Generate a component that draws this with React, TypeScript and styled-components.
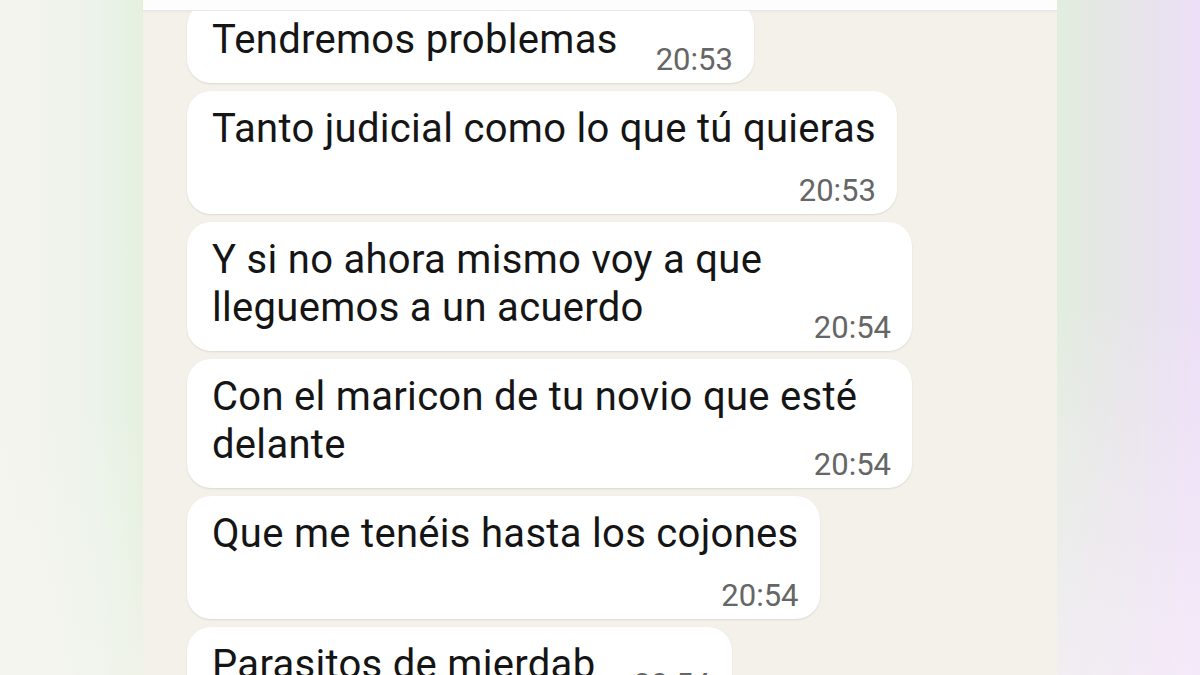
import styled, { createGlobalStyle, css } from "styled-components";

type Message = {
  text: string;
  time: string;
  stacked?: boolean;
};

const messages: Message[] = [
  { text: "Tendremos problemas", time: "20:53" },
  { text: "Tanto judicial como lo que tú quieras", time: "20:53", stacked: true },
  { text: "Y si no ahora mismo voy a que lleguemos a un acuerdo", time: "20:54" },
  { text: "Con el maricon de tu novio que esté delante", time: "20:54" },
  { text: "Que me tenéis hasta los cojones", time: "20:54", stacked: true },
  { text: "Parasitos de mierdab", time: "20:54" },
];

const GlobalStyle = createGlobalStyle`
  html, body {
    margin: 0;
    padding: 0;
    width: 1200px;
    height: 675px;
    overflow: hidden;
  }

  body {
    font-family: Roboto, "Noto Sans", "Liberation Sans", sans-serif;
  }
`;

const Page = styled.div`
  display: flex;
  width: 1200px;
  height: 675px;
  overflow: hidden;
`;

const LeftBlur = styled.div`
  width: 143px;
  flex-shrink: 0;
  background:
    linear-gradient(180deg, rgba(255, 255, 255, 0) 60%, rgba(246, 246, 240, 0.5) 100%),
    linear-gradient(90deg, #f4f4ee 0%, #f0f3ec 40%, #ebf3ea 70%, #e5f0de 100%);
`;

const RightBlur = styled.div`
  width: 143px;
  flex-shrink: 0;
  background:
    linear-gradient(180deg, rgba(255, 255, 255, 0) 45%, rgba(248, 238, 250, 0.7) 100%),
    linear-gradient(90deg, #e2eddf 0%, #e4e8e3 25%, #e7e4ea 55%, #ecdff7 100%);
`;

const Phone = styled.div`
  flex: 1;
  display: flex;
  flex-direction: column;
  background: #f4f1ea;
  min-width: 0;
`;

const Header = styled.div`
  height: 10px;
  flex-shrink: 0;
  background: #fdfdfd;
  border-bottom: 1px solid #e8e7e2;
  box-shadow: 0 1px 2px rgba(0, 0, 0, 0.04);
`;

const ChatList = styled.div`
  flex: 1;
  overflow: hidden;
  display: flex;
  flex-direction: column;
  align-items: flex-start;
  gap: 8px;
  padding-left: 44px;

  & > :first-child {
    margin-top: -9px;
  }
`;

const Bubble = styled.div`
  box-sizing: border-box;
  max-width: 725px;
  flex-shrink: 0;
  background: #ffffff;
  border-radius: 24px;
  padding: 14px 21px 8px 25px;
  box-shadow: 0 1px 2px rgba(0, 0, 0, 0.1);
`;

const Text = styled.div`
  font-size: 40px;
  line-height: 48px;
  color: #151515;
  letter-spacing: 0.3px;
`;

const Time = styled.span<{ $stacked?: boolean }>`
  font-size: 31px;
  line-height: 30px;
  color: #666666;
  letter-spacing: 0;

  ${(p) =>
    p.$stacked
      ? css`
          display: block;
          text-align: right;
          margin-top: 23px;
        `
      : css`
          float: right;
          margin: 29px 0 0 38px;
        `}
`;

function ChatBubble({ text, time, stacked }: Message) {
  return (
    <Bubble>
      <Text>
        {text}
        {!stacked && <Time>{time}</Time>}
      </Text>
      {stacked && <Time $stacked>{time}</Time>}
    </Bubble>
  );
}

function App() {
  return (
    <>
      <GlobalStyle />
      <Page>
        <LeftBlur />
        <Phone>
          <Header />
          <ChatList>
            {messages.map((m, i) => (
              <ChatBubble key={i} {...m} />
            ))}
          </ChatList>
        </Phone>
        <RightBlur />
      </Page>
    </>
  );
}

export default App;
